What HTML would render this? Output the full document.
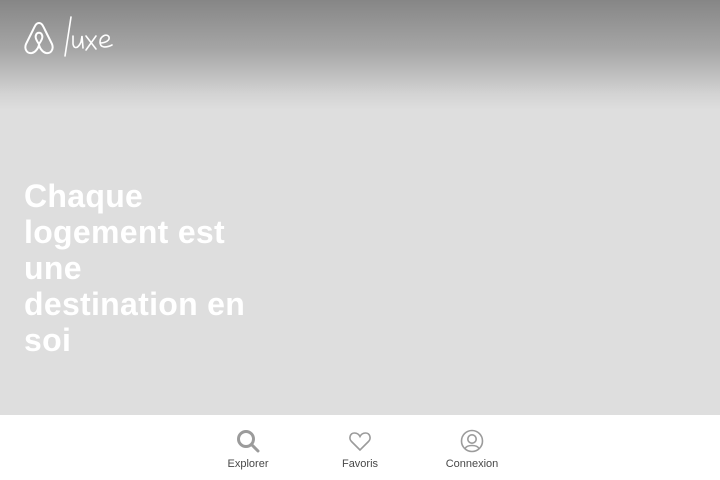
<!DOCTYPE html>
<html><head><meta charset="utf-8"><style>
body{margin:0;width:720px;height:480px;overflow:hidden;font-family:"Liberation Sans",sans-serif;background:#fff}
.hero{position:absolute;left:0;top:0;width:720px;height:415px;background:linear-gradient(#868686 0px,#a6a6a6 50px,#d4d4d4 95px,#dedede 110px,#dedede 100%)}
h1{position:absolute;left:24px;top:178px;margin:0;color:#fff;font-size:32px;line-height:36px;font-weight:bold;letter-spacing:0.3px;white-space:nowrap}
.nav{position:absolute;top:415px;left:0;width:720px;height:65px;background:#fff}
.it{position:absolute;top:14px;width:100px;text-align:center;font-size:11px;color:#484848}
.it svg{display:block;margin:0 auto 5px}
</style></head><body>
<div class="hero">
<svg style="position:absolute;left:22px;top:14px" width="95" height="46" viewBox="0 0 95 46" fill="none" stroke="#fff" stroke-width="2" stroke-linecap="round">
<path d="M17 9 C14 9 13 12 11 16 L4 30 C2 35 5 40 10 39 C14 38 17 33 17 30 C17 33 20 38 24 39 C29 40 32 35 30 30 L23 16 C21 12 20 9 17 9 Z M17 30 C14 26 13 23 14 21 C15 18 19 18 20 21 C21 23 20 26 17 30"/>
<path d="M49 3 L43 42" stroke-width="1.6"/>
<path d="M51 22 L51 30 C52 35 56 35 59 28 L60 22 L61 34" stroke-width="1.6"/>
<path d="M64 22 L74 35 M74 22 L64 36" stroke-width="1.6"/>
<path d="M78 29 C84 29 88 26 87 23 C85 19 78 22 78 28 C78 34 84 34 90 31" stroke-width="1.6"/>
</svg>
<h1>Chaque<br>logement est<br>une<br>destination en<br>soi</h1>
</div>
<div class="nav">
<div class="it" style="left:198px"><svg width="24" height="24" viewBox="0 0 24 24" fill="none" stroke="#9b9b9b" stroke-width="3" stroke-linecap="round"><circle cx="10" cy="10" r="7.5"/><path d="M15.5 15.5 L22 22"/></svg>Explorer</div>
<div class="it" style="left:310px"><svg width="24" height="24" viewBox="0 0 24 24" fill="none" stroke="#9b9b9b" stroke-width="1.6"><path d="M12 21 L3.5 12.5 C0.5 9.5 2 4 6.5 4 C9 4 11 5.5 12 7.5 C13 5.5 15 4 17.5 4 C22 4 23.5 9.5 20.5 12.5 Z"/></svg>Favoris</div>
<div class="it" style="left:422px"><svg width="24" height="24" viewBox="0 0 24 24" fill="none" stroke="#9b9b9b" stroke-width="1.6"><circle cx="12" cy="12" r="10.5"/><circle cx="12" cy="10" r="4.2"/><path d="M5 19.5 C7 15.5 17 15.5 19 19.5"/></svg>Connexion</div>
</div>
</body></html>
